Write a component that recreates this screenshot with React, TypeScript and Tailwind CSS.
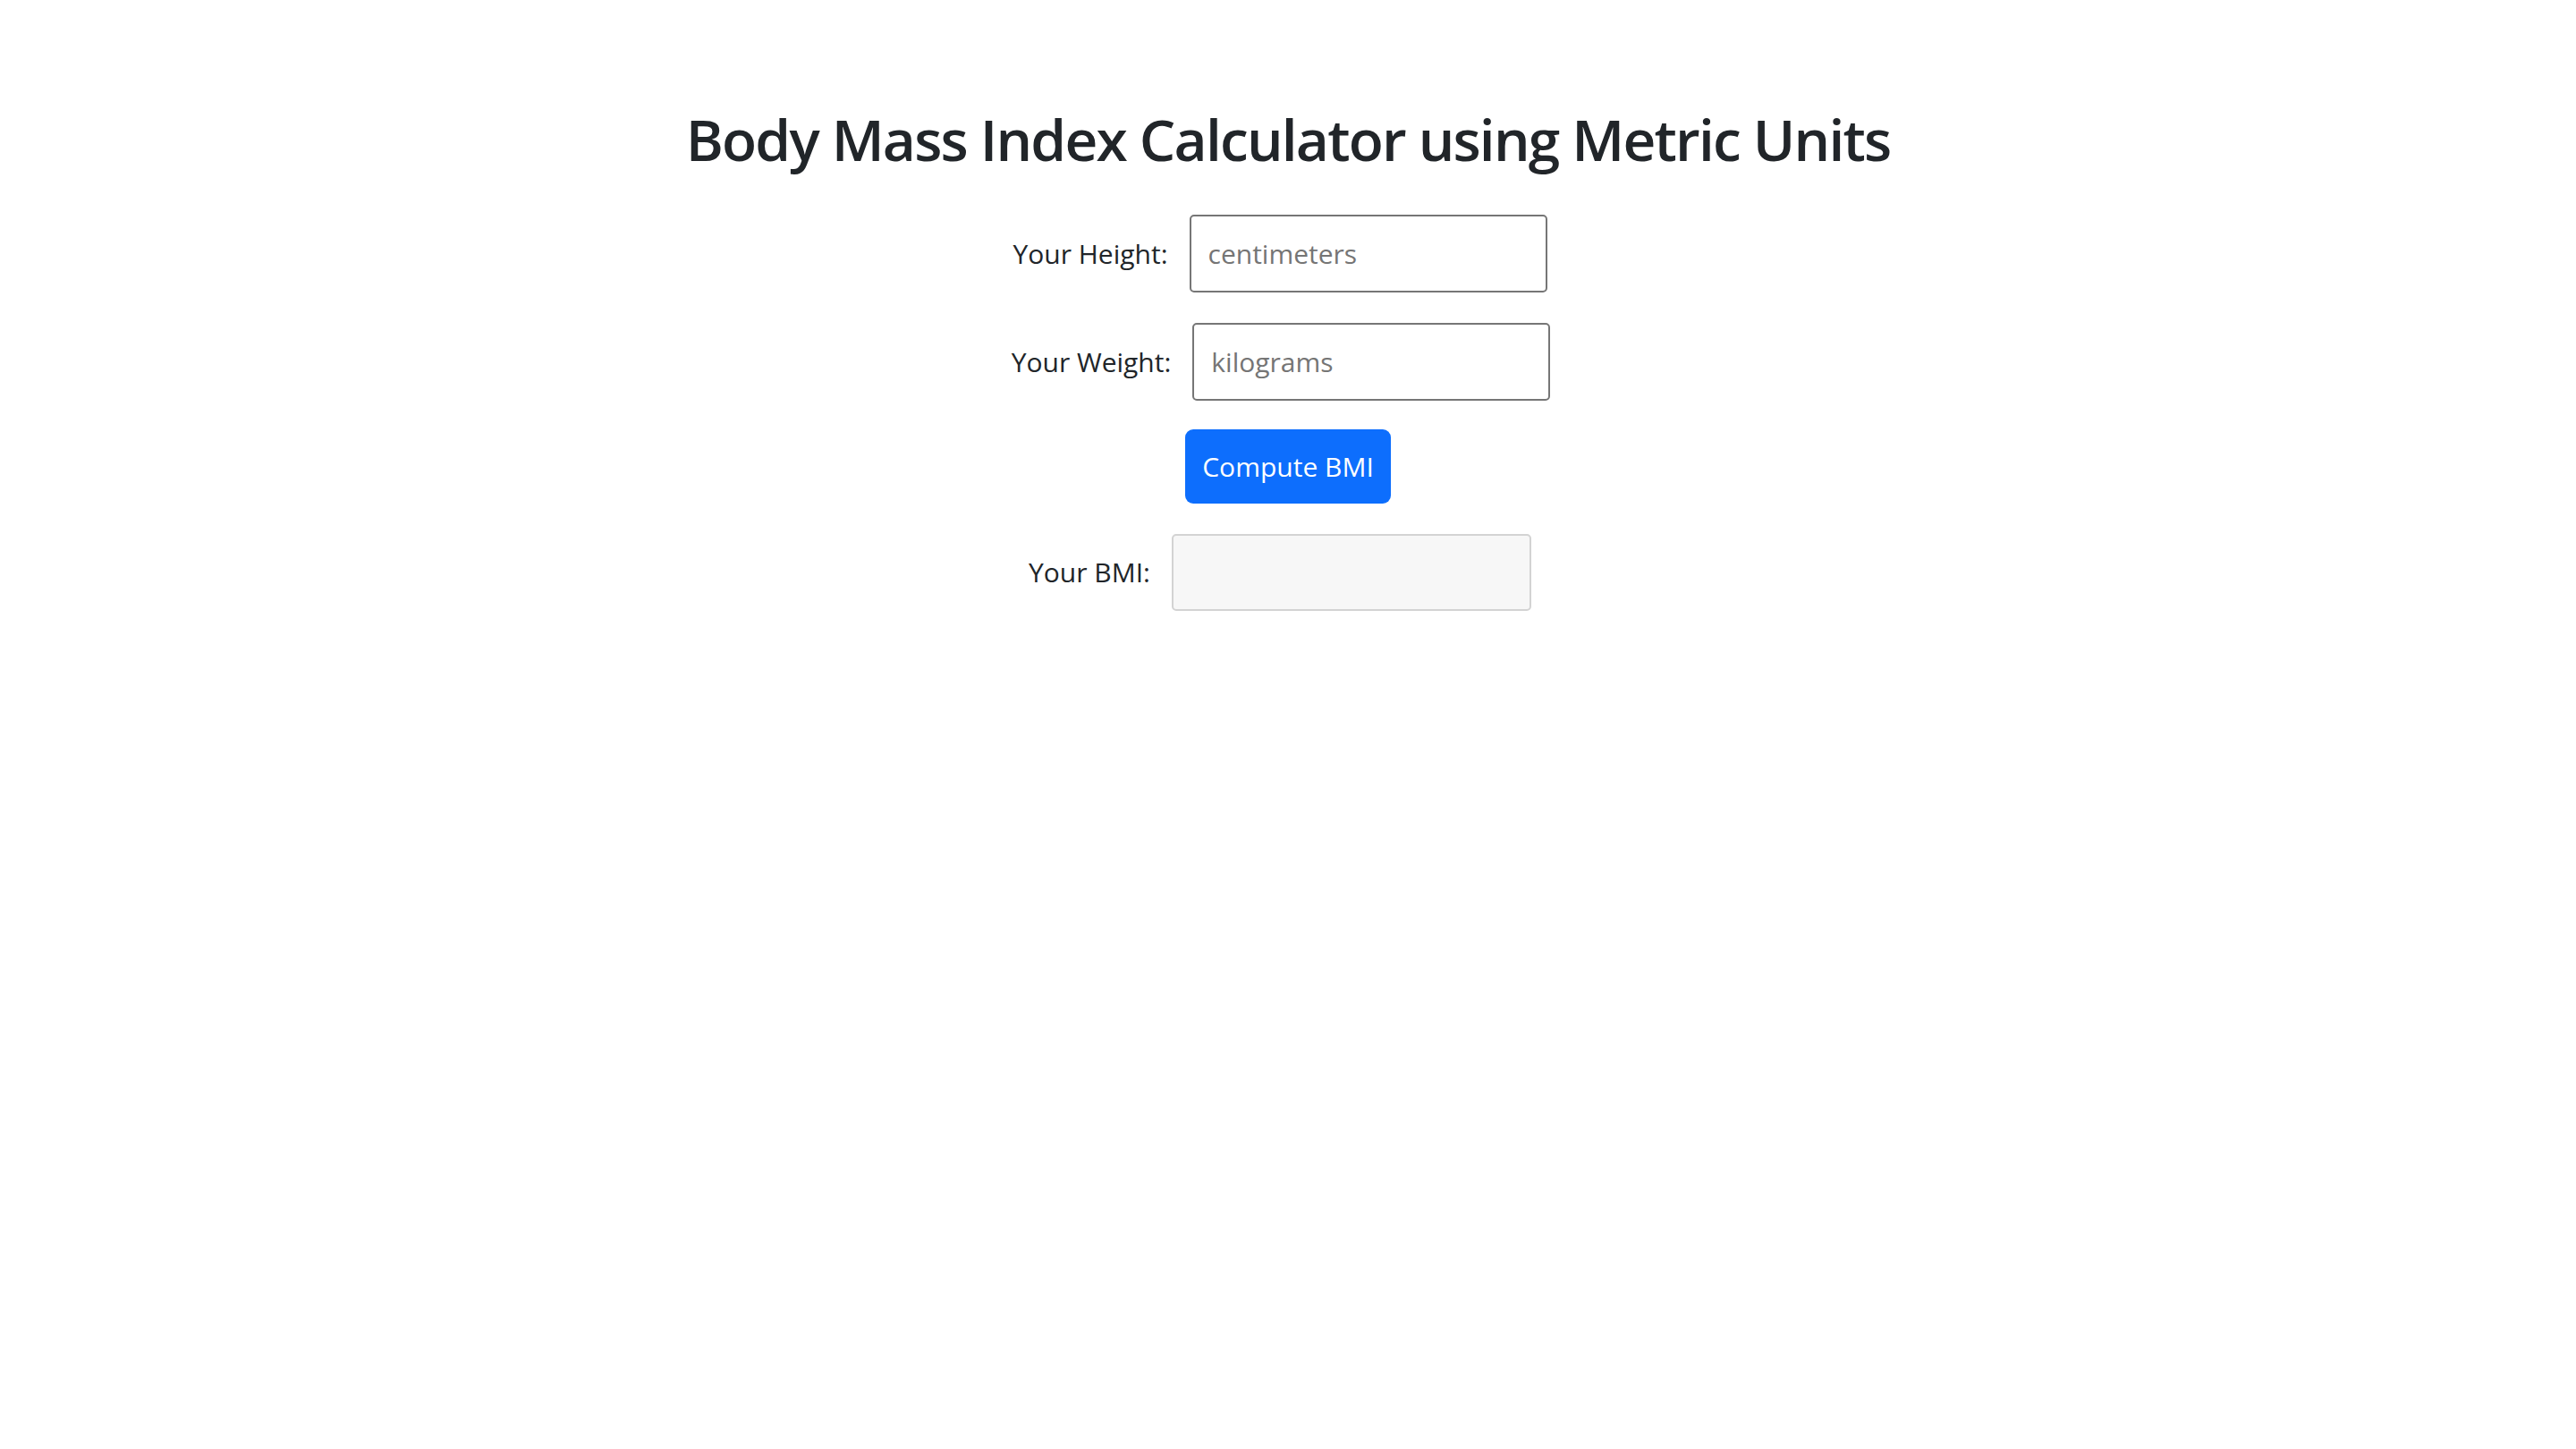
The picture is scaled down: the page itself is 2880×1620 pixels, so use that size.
import { useState } from "react";

export default function App() {
  const [height, setHeight] = useState("");
  const [weight, setWeight] = useState("");
  const [bmi, setBmi] = useState("");

  function computeBmi() {
    const h = parseFloat(height) / 100;
    const w = parseFloat(weight);
    if (!h || !w) return setBmi("");
    setBmi((w / (h * h)).toFixed(1));
  }

  return (
    <div className="w-full min-h-screen bg-white text-[#212529] font-['Open_Sans',sans-serif]">
      <div className="flex flex-col items-center pt-[118px]">
        <h2 className="text-[64px] leading-[1.2] font-semibold tracking-[-0.028em]">
          Body Mass Index Calculator using Metric Units
        </h2>

        <div className="flex items-center gap-6 mt-[45px] pr-[18px]">
          <label className="text-[30px]">Your Height:</label>
          <input
            className="w-[400px] h-[87px] px-[19px] text-[30px] border-2 border-[#767676] rounded-[5px] outline-none placeholder:text-[#757575]"
            placeholder="centimeters"
            value={height}
            onChange={(e) => setHeight(e.target.value)}
          />
        </div>

        <div className="flex items-center gap-6 mt-[34px] pr-[16px]">
          <label className="text-[30px]">Your Weight:</label>
          <input
            className="w-[400px] h-[87px] px-[19px] text-[30px] border-2 border-[#767676] rounded-[5px] outline-none placeholder:text-[#757575]"
            placeholder="kilograms"
            value={weight}
            onChange={(e) => setWeight(e.target.value)}
          />
        </div>

        <button
          onClick={computeBmi}
          className="mt-[32px] h-[83px] px-[19px] rounded-[9px] bg-[#0d6efd] text-white text-[30px] hover:bg-[#0b5ed7]"
        >
          Compute BMI
        </button>

        <div className="flex items-center gap-6 mt-[34px] pr-[18px]">
          <label className="text-[30px]">Your BMI:</label>
          <input
            readOnly
            className="w-[402px] h-[86px] px-[19px] text-[30px] border-2 border-[#d3d3d3] bg-[#f7f7f7] rounded-[5px] outline-none"
            value={bmi}
          />
        </div>
      </div>
    </div>
  );
}
